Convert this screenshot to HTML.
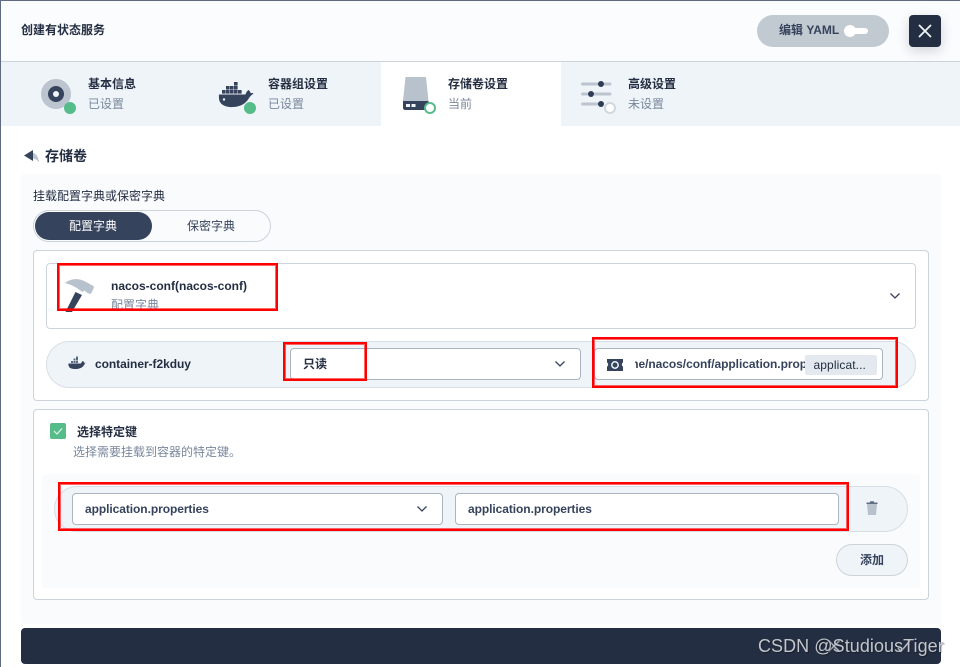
<!DOCTYPE html>
<html lang="zh"><head><meta charset="utf-8"><title>创建有状态服务</title>
<style>
html,body{margin:0;padding:0;background:#fff}
#p{position:relative;width:960px;height:667px;overflow:hidden;background:#fff;font-family:"Liberation Sans","Noto Sans CJK SC",sans-serif;font-size:12px;color:#242e42}
#p div,#p svg{position:absolute;box-sizing:border-box}
.t{position:absolute;white-space:nowrap;line-height:16px}
.b{font-weight:700}
.g{color:#79879c}
.box{background:#fff;border:1px solid #ccd3db;border-radius:4px}
.inp{background:#fff;border:1px solid #abb4c0;border-radius:4px}
.red{border:2px solid #f00;z-index:5;box-shadow:inset 0 0 0 1px rgba(255,0,0,.6)}
</style></head><body><div id="p">
<div style="left:0;top:0;width:960px;height:1px;background:#5f6b80"></div>
<div style="left:0;top:0;width:1px;height:667px;background:#5f6b80"></div>
<div style="left:1px;top:1px;width:959px;height:60px;background:#fbfcfe"></div>
<div style="left:1px;top:61px;width:959px;height:1px;background:#ccd3db"></div>
<span class="t b" style="left:21px;top:22px">创建有状态服务</span>
<div style="left:757px;top:15px;width:132px;height:32px;border-radius:16px;background:#c1c9d1"></div>
<span class="t b" style="left:779px;top:22px;color:#36435c">编辑 YAML</span>
<div style="left:847px;top:28px;width:21px;height:6px;border-radius:3px;background:#fff"></div>
<div style="left:844px;top:25px;width:12px;height:12px;border-radius:50%;background:#fff"></div>
<div style="left:909px;top:15px;width:32px;height:32px;border-radius:4px;background:#242e42;box-shadow:0 4px 12px rgba(36,46,66,.2)"></div>
<svg style="left:909px;top:15px" width="32" height="32"><path d="M10 10L22 22M22 10L10 22" stroke="#eff4f9" stroke-width="1.800" fill="none"/></svg>

<div style="left:1px;top:62px;width:959px;height:64px;background:#eff4f9"></div>
<div style="left:381px;top:62px;width:180px;height:64px;background:#fff"></div>

<svg style="left:38px;top:76px" width="40" height="42"><circle cx="18" cy="18" r="15" fill="#bcc5cf"/><circle cx="18" cy="18" r="8" fill="#36435c"/><circle cx="18" cy="18" r="3" fill="#eff4f9"/><circle cx="32" cy="32" r="6" fill="#55bc8a"/></svg>
<span class="t b" style="left:88px;top:76px">基本信息</span>
<span class="t g" style="left:88px;top:96px">已设置</span>

<svg style="left:216px;top:78px" width="44" height="40"><path d="M3 16.500H29.500C30 14.500 31.500 12.500 32.500 12C33.800 13 34.500 14.200 34.800 15.300C36.500 14.800 38 15 37 16C35.500 17 34.500 18 33 20C30 25.500 25 28.500 17.500 29C10 29.500 5 27 3.500 23C3 21.500 2.800 18.500 3 16.500Z" fill="#36435c"/><circle cx="8" cy="21.500" r="1.200" fill="#eff4f9"/><g fill="#36435c"><rect x="6" y="12" width="3.600" height="3.600"/><rect x="10" y="12" width="3.600" height="3.600"/><rect x="14" y="12" width="3.600" height="3.600"/><rect x="18" y="12" width="3.600" height="3.600"/><rect x="22" y="12" width="3.600" height="3.600"/><rect x="10" y="8" width="3.600" height="3.600"/><rect x="14" y="8" width="3.600" height="3.600"/><rect x="18" y="8" width="3.600" height="3.600"/><rect x="18" y="4" width="3.600" height="3.600"/></g><circle cx="34" cy="30" r="6" fill="#55bc8a"/></svg>
<span class="t b" style="left:268px;top:76px">容器组设置</span>
<span class="t g" style="left:268px;top:96px">已设置</span>

<svg style="left:400px;top:74px" width="40" height="42"><path d="M5.500 3H26L28.500 27H3Z" fill="#b8c2cd"/><path d="M3 27H28.500V36H5C4 36 3 35 3 34Z" fill="#36435c"/><rect x="6" y="30" width="4" height="3" fill="#eff4f9"/><rect x="11.500" y="30" width="4" height="3" fill="#eff4f9"/><circle cx="30" cy="34" r="5" fill="#fff" stroke="#55bc8a" stroke-width="2"/></svg>
<span class="t b" style="left:448px;top:76px">存储卷设置</span>
<span class="t g" style="left:448px;top:96px">当前</span>

<svg style="left:580px;top:78px" width="40" height="38"><g stroke="#bcc5cf" stroke-width="3" stroke-linecap="round" fill="none"><path d="M2.500 6H18M25 6H30M2.500 16H7M15 16H30M2.500 26H18"/></g><g fill="#2f3c55"><circle cx="21" cy="6" r="3"/><circle cx="11" cy="16" r="3"/><circle cx="21" cy="26" r="3"/></g><circle cx="30" cy="30" r="5" fill="#fff" stroke="#d1d7de" stroke-width="2"/></svg>
<span class="t b" style="left:628px;top:76px">高级设置</span>
<span class="t g" style="left:628px;top:96px">未设置</span>

<svg style="left:22px;top:148px" width="18" height="18"><path d="M10 4.500C14 5 16.500 9 17 14.500C15 11.500 13 10.500 10 10.500Z" fill="#bcc5cf"/><path d="M11 2V13L2 7.500Z" fill="#36435c"/></svg>
<span class="t b" style="left:45px;top:148px;font-size:14px;line-height:16px">存储卷</span>

<div style="left:21px;top:174px;width:920px;height:450px;background:#f9fbfd;border-radius:4px"></div>
<span class="t" style="left:33px;top:188px">挂载配置字典或保密字典</span>
<div style="left:33px;top:210px;width:238px;height:32px;border:1px solid #ccd3db;border-radius:16px;background:#f9fbfd"></div>
<div style="left:35px;top:212px;width:117px;height:28px;border-radius:14px;background:#36435c"></div>
<span class="t" style="left:69px;top:218px;color:#fff">配置字典</span>
<span class="t" style="left:187px;top:218px;color:#36435c">保密字典</span>

<div class="box" style="left:33px;top:250px;width:896px;height:151px"></div>
<div class="box" style="left:46px;top:263px;width:870px;height:66px"></div>
<svg style="left:60px;top:276px" width="40" height="38"><path d="M5 7C9 3.500 15 2.500 20 3.500C25 5 30 8 34 10.500C33.500 13 32 16 30.500 18C28 17.500 26 16 24.500 14.500L22.500 16L16 11.500C12.500 9.500 9 8 5 7Z" fill="#b8c2cd"/><path d="M15.500 16L22 19L12 36H5.500Z" fill="#36435c"/></svg>
<span class="t b" style="left:111px;top:278px">nacos-conf(nacos-conf)</span>
<span class="t g" style="left:111px;top:297px">配置字典</span>
<svg style="left:889px;top:290px" width="12" height="12"><path d="M1.500 3.500L6 8L10.500 3.500" stroke="#36435c" stroke-width="1.300" fill="none"/></svg>

<div style="left:46px;top:341px;width:870px;height:47px;border:1px solid #d8dee5;border-radius:24px;background:#eff4f9"></div>
<svg style="left:67px;top:355px" width="20" height="18"><path d="M1.500 8.500H14C14.500 7 15.500 6 16 6C16.500 6.500 17 7 17 7.800C18 7.600 19 7.800 18 8.300C17 10.500 15.500 13 11.500 13.700C7.500 14.300 3.500 14 2.200 12C1.500 11 1.200 9.500 1.500 8.500Z" fill="#36435c"/><g fill="#5b6a80"><rect x="4" y="6" width="2" height="2"/><rect x="6.500" y="6" width="2" height="2"/><rect x="9" y="6" width="2" height="2"/><rect x="6.500" y="3.500" width="2" height="2"/><rect x="9" y="3.500" width="2" height="2"/><rect x="9" y="1.500" width="2" height="2"/></g></svg>
<span class="t b" style="left:95px;top:356px;letter-spacing:-.05px">container-f2kduy</span>
<div class="inp" style="left:290px;top:348px;width:291px;height:32px"></div>
<span class="t b" style="left:303px;top:356px">只读</span>
<svg style="left:554px;top:358px" width="12" height="12"><path d="M1.500 3.500L6 8L10.500 3.500" stroke="#36435c" stroke-width="1.300" fill="none"/></svg>
<div class="inp" style="left:594px;top:348px;width:289px;height:32px"></div>
<svg style="left:606px;top:356px" width="18" height="18"><path d="M1 3H17V6.500C15.500 7 15.500 10 17 10.500V15H1V10.500C2.500 10 2.500 7 1 6.500Z" fill="#36435c"/><circle cx="9" cy="9" r="3.200" fill="none" stroke="#eff4f9" stroke-width="1.500"/></svg>
<div style="left:635px;top:349px;width:170px;height:30px;overflow:hidden"><span class="t b" style="left:-25px;top:7px;color:#36435c;letter-spacing:-.05px">/home/nacos/conf/application.properties</span></div>
<div style="left:805px;top:355px;width:72px;height:20px;border-radius:2px;background:#e3e9ef"></div>
<span class="t" style="left:813.500px;top:357px;color:#242e42;letter-spacing:.1px">applicat...</span>

<div class="box" style="left:33px;top:409px;width:896px;height:191px"></div>
<div style="left:50px;top:423px;width:16px;height:16px;border-radius:2px;background:#55bc8a"></div>
<svg style="left:50px;top:423px" width="16" height="16"><path d="M4 8L7 11L12 5.500" stroke="#e6f5ee" stroke-width="1.200" fill="none"/></svg>
<span class="t b" style="left:77px;top:424px">选择特定键</span>
<span class="t g" style="left:73px;top:444px">选择需要挂载到容器的特定键。</span>
<div style="left:42px;top:474px;width:878px;height:114px;border-radius:4px;background:#f9fbfd"></div>
<div style="left:54px;top:486px;width:854px;height:46px;border:1px solid #d8dee5;border-radius:23px;background:#eff4f9"></div>
<div class="inp" style="left:72px;top:493px;width:371px;height:32px"></div>
<span class="t b" style="left:85px;top:501px;color:#36435c;letter-spacing:-.07px">application.properties</span>
<svg style="left:416px;top:503px" width="12" height="12"><path d="M1.500 3.500L6 8L10.500 3.500" stroke="#36435c" stroke-width="1.300" fill="none"/></svg>
<div class="inp" style="left:455px;top:493px;width:384px;height:32px"></div>
<span class="t b" style="left:468px;top:501px;color:#36435c;letter-spacing:-.07px">application.properties</span>
<svg style="left:864px;top:500px" width="16" height="16"><path d="M2.500 2.500H13.500V4H2.500ZM6 1.200H10V2.500H6Z" fill="#5f6e84"/><path d="M3 4H13L12 15H4Z" fill="#b8c2cd"/></svg>
<div style="left:836px;top:544px;width:72px;height:32px;border:1px solid #ccd3db;border-radius:16px;background:#eff4f9"></div>
<span class="t b" style="left:860px;top:552px;color:#36435c">添加</span>

<div style="left:21px;top:628px;width:920px;height:36px;border-radius:4px;background:#242e42"></div>
<svg style="left:826px;top:638px" width="16" height="16"><path d="M2.500 2.500L13.500 13.500M13.500 2.500L2.500 13.500" stroke="#b9bec7" stroke-width="1.500" fill="none"/></svg>
<svg style="left:896px;top:638px" width="16" height="16"><path d="M2 10L5 13.500L14 2.500" stroke="#b9bec7" stroke-width="1.500" fill="none"/></svg>
<span class="t" style="left:758px;top:636px;font-size:18px;line-height:21px;color:#c2c6cc;z-index:6;letter-spacing:.06px;text-shadow:1px 1px 1px rgba(0,0,0,.35)">CSDN @StudiousTiger</span>

<div class="red" style="left:57px;top:263px;width:221px;height:48px"></div>
<div class="red" style="left:283px;top:342px;width:84px;height:39px"></div>
<div class="red" style="left:592px;top:337px;width:306px;height:51px"></div>
<div class="red" style="left:58px;top:482px;width:791px;height:49px"></div>
</div></body></html>
